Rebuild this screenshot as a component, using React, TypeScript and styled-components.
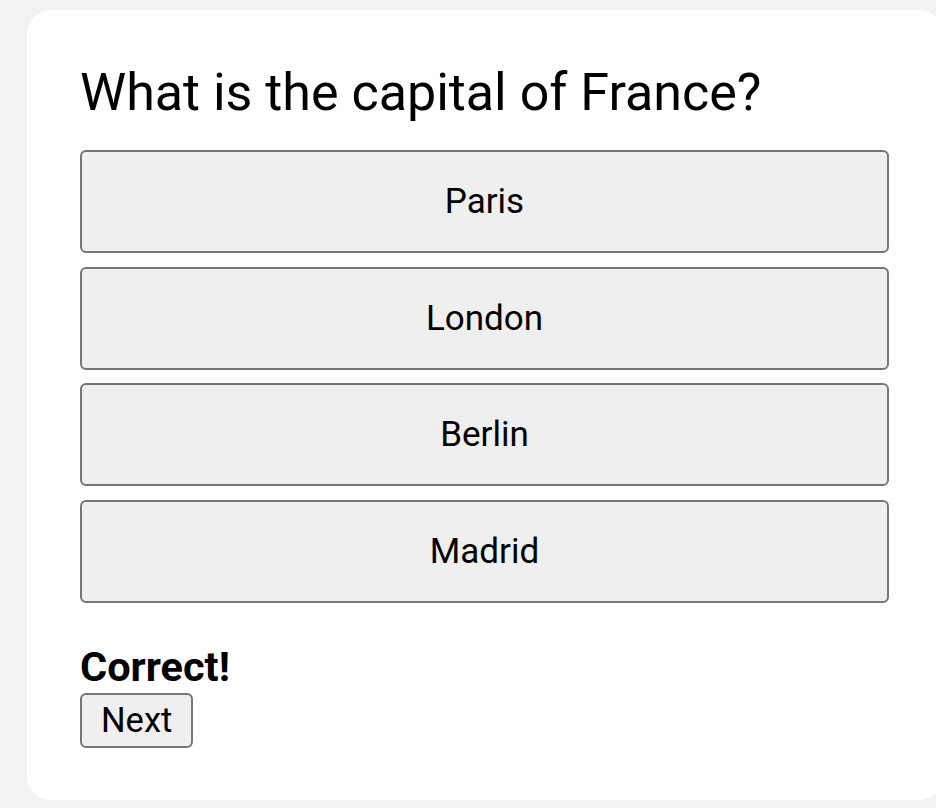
import styled, { createGlobalStyle } from 'styled-components';

const GlobalStyle = createGlobalStyle`
  html, body {
    margin: 0;
    padding: 0;
    overflow: hidden;
    background-color: #f2f2f2;
    font-family: Roboto, "Liberation Sans", Arial, sans-serif;
  }
`;

const Page = styled.div`
  padding: 10px 0 0 27px;
  width: 936px;
  height: 808px;
  box-sizing: border-box;
`;

const Card = styled.div`
  width: 916px;
  box-sizing: border-box;
  background-color: #fff;
  border-radius: 24px;
  padding: 51.7px 54px 52px 53px;
`;

const Question = styled.h1`
  margin: 0 0 27.4px;
  font-size: 52px;
  font-weight: 400;
  line-height: normal;
  color: #000;
`;

const Options = styled.div`
  display: flex;
  flex-direction: column;
  gap: 13.7px;
`;

const OptionButton = styled.button`
  height: 103px;
  width: 100%;
  box-sizing: border-box;
  border: 2px solid #767676;
  border-radius: 6px;
  background-color: #efefef;
  color: #000;
  font-family: inherit;
  font-size: 35px;
  line-height: normal;
  padding: 0;
  cursor: pointer;
`;

const Feedback = styled.p`
  margin: 38.5px 0 2px;
  font-size: 41.5px;
  font-weight: 700;
  line-height: normal;
  color: #000;
`;

const NextButton = styled.button`
  box-sizing: border-box;
  height: 55px;
  padding: 0 19px;
  border: 2px solid #767676;
  border-radius: 6px;
  background-color: #efefef;
  color: #000;
  font-family: inherit;
  font-size: 34.5px;
  line-height: normal;
  cursor: pointer;
`;

const options = ['Paris', 'London', 'Berlin', 'Madrid'];

function App() {
  return (
    <>
      <GlobalStyle />
      <Page>
        <Card>
          <Question>What is the capital of France?</Question>
          <Options>
            {options.map((o) => (
              <OptionButton key={o}>{o}</OptionButton>
            ))}
          </Options>
          <Feedback>Correct!</Feedback>
          <NextButton>Next</NextButton>
        </Card>
      </Page>
    </>
  );
}

export default App;
